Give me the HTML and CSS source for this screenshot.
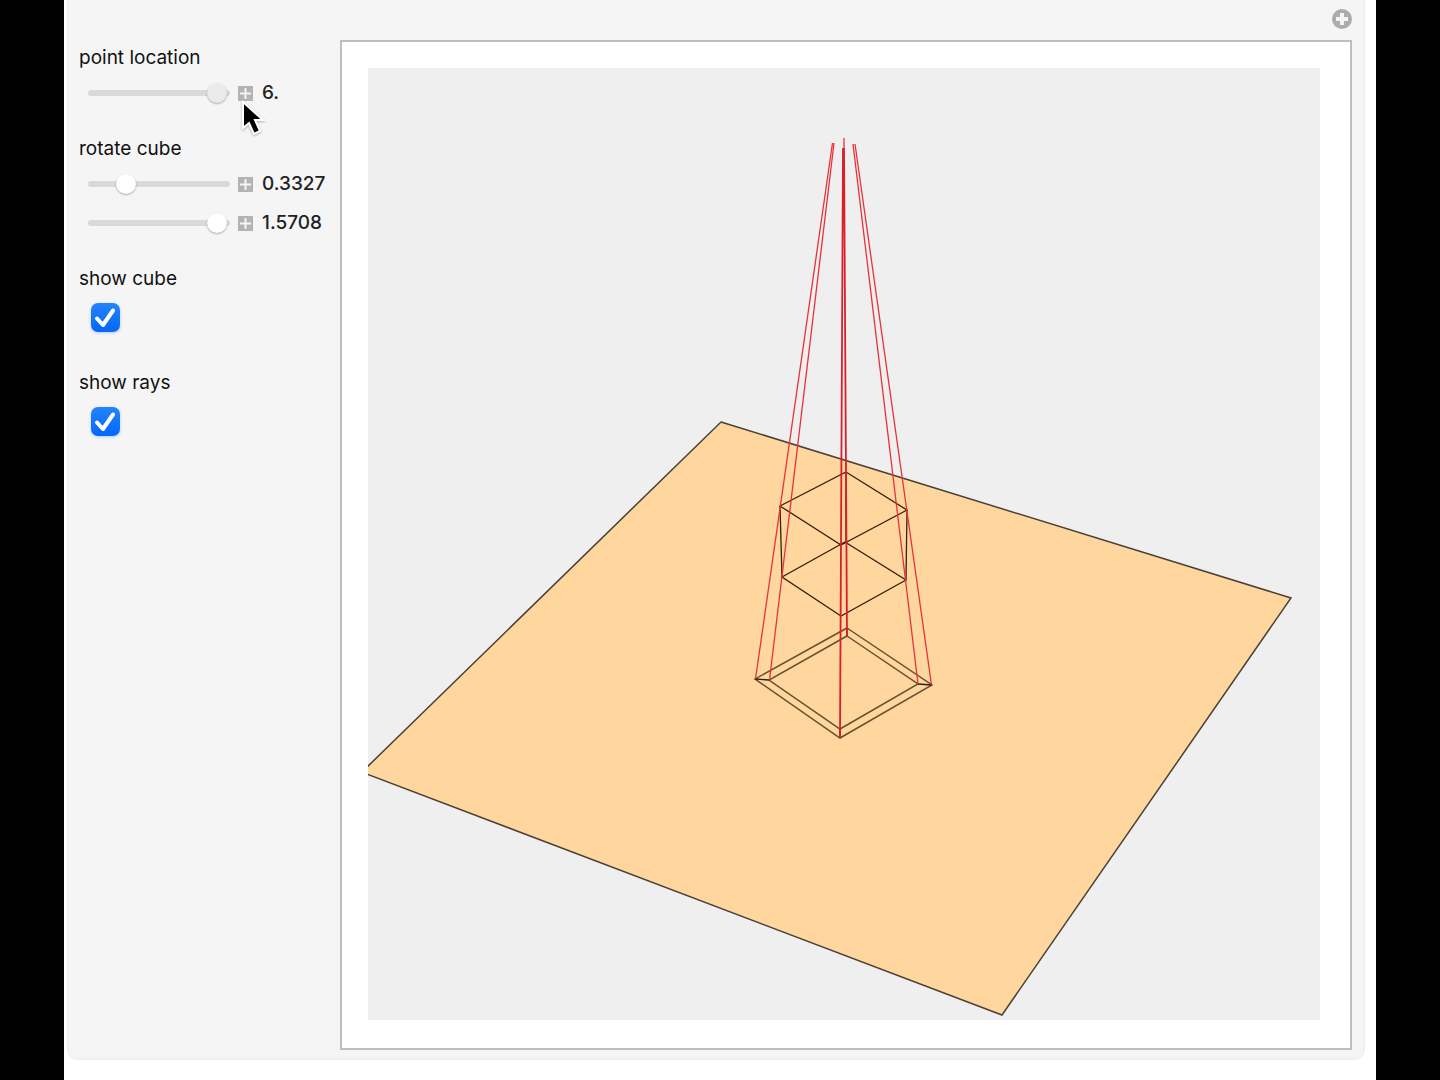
FILE: index.html
```html
<!DOCTYPE html>
<html lang="en">
<head>
    <meta charset="UTF-8">
    <meta name="viewport" content="width=device-width, initial-scale=1.0">
    <title>Cube projection</title>
    <link rel="stylesheet" href="styles.css">
</head>
<body>
    <main class="notebook">
        <div class="panel">
            <div class="toolbar">
                <button class="menu-button" type="button" aria-label="Options">
                    <svg viewBox="0 0 20 20" width="20" height="20">
                        <circle cx="10" cy="10" r="10" fill="#acacac"/>
                        <path d="M10 4v12M4 10h12" stroke="#f4f4f4" stroke-width="4"/>
                    </svg>
                </button>
            </div>

            <form class="controls">
                <div class="group">
                    <label class="name" for="location">point location</label>
                    <div class="row">
                        <span class="track"><input class="pressed" type="range" id="location" min="1" max="6" step="any" value="6"></span>
                        <button class="expand" type="button" aria-label="Expand point location">
                            <svg viewBox="0 0 15 15" width="15" height="15"><path d="M7.5 2v11M2 7.5h11"/></svg>
                        </button>
                        <output for="location">6.</output>
                        <svg class="cursor" viewBox="0 0 28 38" width="28" height="38">
                            <path d="M3 2v26l6-5 5 11 6-3-5-11h8z"/>
                        </svg>
                    </div>
                </div>

                <div class="group">
                    <label class="name" for="rotate-a">rotate cube</label>
                    <div class="row">
                        <span class="track"><input type="range" id="rotate-a" min="0" max="1.5708" step="any" value="0.3327"></span>
                        <button class="expand" type="button" aria-label="Expand first angle">
                            <svg viewBox="0 0 15 15" width="15" height="15"><path d="M7.5 2v11M2 7.5h11"/></svg>
                        </button>
                        <output for="rotate-a">0.3327</output>
                    </div>
                    <div class="row">
                        <span class="track"><input type="range" id="rotate-b" aria-label="rotate cube, second angle" min="0" max="1.5708" step="any" value="1.5708"></span>
                        <button class="expand" type="button" aria-label="Expand second angle">
                            <svg viewBox="0 0 15 15" width="15" height="15"><path d="M7.5 2v11M2 7.5h11"/></svg>
                        </button>
                        <output for="rotate-b">1.5708</output>
                    </div>
                </div>

                <div class="group">
                    <label class="name" for="show-cube">show cube</label>
                    <div class="check">
                        <input type="checkbox" id="show-cube" checked>
                        <svg viewBox="0 0 29 29" width="29" height="29"><path d="M6 15.5l6 6.5L22 7.5"/></svg>
                    </div>
                </div>

                <div class="group">
                    <label class="name" for="show-rays">show rays</label>
                    <div class="check">
                        <input type="checkbox" id="show-rays" checked>
                        <svg viewBox="0 0 29 29" width="29" height="29"><path d="M6 15.5l6 6.5L22 7.5"/></svg>
                    </div>
                </div>
            </form>

            <div class="stage">
                <svg class="plot" viewBox="368 68 952 952">
                    <rect x="368" y="68" width="952" height="952" fill="#efefef"/>
                    <!-- plane -->
                    <path class="plane" d="M721 422L1291 598L1002 1015L364 773V770z"/>

                    <!-- cube -->
                    <path class="edge" d="M846 472L907 510L841 545L780 506z"/>
                    <path class="edge" d="M845 542L906 580L841 616L782 577z"/>
                    <path class="edge" d="M780 506L782 577M907 510L906 580M846 472V542"/>

                    <!-- shadow on the plane -->
                    <path class="edge shadow" d="M847 628L932 685L840 738L755 679z"/>
                    <path class="edge shadow" d="M847 636L918 684L840 729L769 680z"/>
                    <path class="edge" d="M755 679L769 680M918 684L932 685M847 628V636M840 729V738"/>

                    <!-- rays -->
                    <path class="ray" d="M832.500 143L755.500 679M834 143L769.500 680"/>
                    <path class="ray" d="M853 144L918 684M855 144L931.500 685"/>
                    <path class="ray" d="M844 138V148"/>
                    <path class="ray center" d="M843 148L840 738M844 148L847 636"/>
                </svg>
            </div>
        </div>
    </main>
</body>
</html>
```

FILE: styles.css
```css
* {
    box-sizing: border-box;
}

body {
    margin: 0;
    padding: 0 64px;
    background-color: #000;
    color: #111;
    font-family: Inter, "Liberation Sans", sans-serif;
    font-size: 19px;
    line-height: 24px;
}

.notebook {
    min-height: 100vh;
    padding: 0 11px 20px 3px;
    background-color: #fff;
}

.panel {
    display: grid;
    grid-template-columns: 271px 1fr;
    padding: 0 11px 8px 0;
    border: 2px solid #f0f0f0;
    border-top: 0;
    border-radius: 0 0 10px 10px;
    background-color: #f5f5f5;
}

.toolbar {
    grid-column: 1 / -1;
    display: flex;
    justify-content: flex-end;
    height: 40px;
    padding-top: 9px;
}

button {
    display: block;
    padding: 0;
    border: 0;
    background: none;
}

button svg {
    display: block;
}

.menu-button {
    height: 20px;
}

.controls {
    display: flex;
    flex-direction: column;
    gap: 30px;
    padding: 6px 0 0 10px;
}

.name {
    display: block;
    margin-bottom: 8px;
}

.row {
    position: relative;
    display: flex;
    align-items: center;
    height: 29px;
    padding-left: 9px;
}

.row + .row {
    margin-top: 10px;
}

output {
    color: #222;
    font-weight: 500;
}

.track {
    position: relative;
    display: flex;
    width: 142px;
    padding: 0 3px;
}

.track::before {
    content: "";
    position: absolute;
    inset: 7px 0;
    border-radius: 3px;
    background-color: #d9d9d9;
}

input {
    margin: 0;
    appearance: none;
}

input[type="range"] {
    position: relative;
    width: 100%;
    height: 20px;
    background: none;
}

input[type="range"]::-webkit-slider-thumb {
    width: 20px;
    height: 20px;
    appearance: none;
    border-radius: 50%;
    background-color: #fff;
    box-shadow: 0 1px 2px rgba(0, 0, 0, 0.3);
}

input.pressed::-webkit-slider-thumb {
    background-color: #ebebeb;
}

.expand {
    margin: 1px 9px 0 8px;
    background-color: #b3b3b3;
}

.expand path {
    fill: none;
    stroke: #f5f5f5;
    stroke-width: 2;
}

.cursor {
    position: absolute;
    top: 22px;
    left: 161px;
    filter: drop-shadow(0 1px 1px rgba(0, 0, 0, 0.3));
}

.cursor path {
    fill: #000;
    stroke: #fff;
    stroke-width: 2;
}

.check {
    display: grid;
    justify-content: start;
    padding: 4px 0 9px 12px;
}

.check input,
.check svg {
    grid-area: 1 / 1;
    width: 29px;
    height: 29px;
}

.check input {
    border-radius: 7px;
    background: linear-gradient(#2384fb, #0468f8);
    box-shadow: 0 1px 3px rgba(0, 110, 255, 0.3);
}

.check path {
    visibility: hidden;
    fill: none;
    stroke: #fff;
    stroke-width: 4;
    stroke-linecap: round;
    stroke-linejoin: round;
}

.check input:checked + svg path {
    visibility: visible;
}

.check svg {
    pointer-events: none;
}

.stage {
    padding: 26px 30px 28px 26px;
    border: 2px solid #bebebe;
    background-color: #fff;
}

.plot {
    display: block;
    width: 100%;
}

.plane {
    fill: #fed69e;
    stroke: #4a4035;
    stroke-width: 1.5;
}

.edge {
    fill: none;
    stroke: #35200c;
    stroke-width: 1.3;
}

.shadow {
    stroke: #66502f;
    stroke-width: 1.5;
}

.ray {
    fill: none;
    stroke: #e8323a;
    stroke-width: 1.3;
}

.center {
    stroke: #d8202a;
    stroke-width: 1.8;
}
```
